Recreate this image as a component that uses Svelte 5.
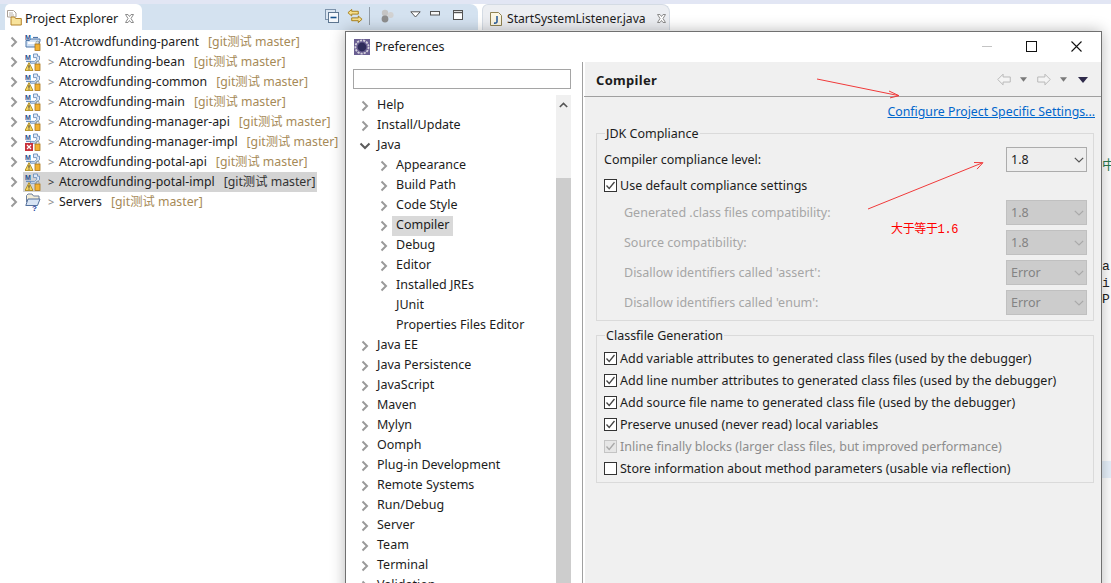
<script>
  const projects = [
    { name: '01-Atcrowdfunding-parent', kind: 'root' },
    { name: 'Atcrowdfunding-bean', kind: 'warn' },
    { name: 'Atcrowdfunding-common', kind: 'warn' },
    { name: 'Atcrowdfunding-main', kind: 'warn' },
    { name: 'Atcrowdfunding-manager-api', kind: 'warn' },
    { name: 'Atcrowdfunding-manager-impl', kind: 'err' },
    { name: 'Atcrowdfunding-potal-api', kind: 'warn' },
    { name: 'Atcrowdfunding-potal-impl', kind: 'warn', sel: true },
    { name: 'Servers', kind: 'srv' }
  ];
  const tree = [
    { t: 'Help', tw: 'r' }, { t: 'Install/Update', tw: 'r' }, { t: 'Java', tw: 'd' },
    { t: 'Appearance', tw: 'r', sub: 1 }, { t: 'Build Path', tw: 'r', sub: 1 }, { t: 'Code Style', tw: 'r', sub: 1 },
    { t: 'Compiler', tw: 'r', sub: 1, sel: true }, { t: 'Debug', tw: 'r', sub: 1 }, { t: 'Editor', tw: 'r', sub: 1 },
    { t: 'Installed JREs', tw: 'r', sub: 1 }, { t: 'JUnit', sub: 1 }, { t: 'Properties Files Editor', sub: 1 },
    { t: 'Java EE', tw: 'r' }, { t: 'Java Persistence', tw: 'r' }, { t: 'JavaScript', tw: 'r' }, { t: 'Maven', tw: 'r' },
    { t: 'Mylyn', tw: 'r' }, { t: 'Oomph', tw: 'r' }, { t: 'Plug-in Development', tw: 'r' }, { t: 'Remote Systems', tw: 'r' },
    { t: 'Run/Debug', tw: 'r' }, { t: 'Server', tw: 'r' }, { t: 'Team', tw: 'r' }, { t: 'Terminal', tw: 'r' }, { t: 'Validation', tw: 'r' }
  ];
  const disabledRows = [
    { l: 'Generated .class files compatibility:', v: '1.8' },
    { l: 'Source compatibility:', v: '1.8' },
    { l: "Disallow identifiers called 'assert':", v: 'Error' },
    { l: "Disallow identifiers called 'enum':", v: 'Error' }
  ];
  const classRows = [
    { l: 'Add variable attributes to generated class files (used by the debugger)', c: true },
    { l: 'Add line number attributes to generated class files (used by the debugger)', c: true },
    { l: 'Add source file name to generated class file (used by the debugger)', c: true },
    { l: 'Preserve unused (never read) local variables', c: true },
    { l: 'Inline finally blocks (larger class files, but improved performance)', c: true, dis: true },
    { l: 'Store information about method parameters (usable via reflection)', c: false }
  ];
</script>

{#snippet twistie(kind)}
  <svg class="tw" width="12" height="12" viewBox="0 0 12 12">
    {#if kind === 'r'}
      <path d="M3.5 1.5 8 6 3.5 10.5" fill="none" stroke="#9a9a9a" stroke-width="2"/>
    {:else if kind === 'd'}
      <path d="M1.5 3.5 6 8 10.5 3.5" fill="none" stroke="#5c5c5c" stroke-width="2"/>
    {/if}
  </svg>
{/snippet}

{#snippet check(on, dis)}
  <span class="cb" class:dis>
    {#if on}
      <svg width="13" height="13" viewBox="0 0 13 13"><path d="M2.5 6.5 5.2 9.5 10.5 3" fill="none" stroke={dis ? '#a8a8a8' : '#444'} stroke-width="1.3"/></svg>
    {/if}
  </span>
{/snippet}

{#snippet combo(v, dis)}
  <span class="combo" class:dis>
    <span>{v}</span>
    <svg width="10" height="6" viewBox="0 0 10 6"><path d="M.8.8 5 5 9.2.8" fill="none" stroke={dis ? '#a9a9a9' : '#555'} stroke-width="1.2"/></svg>
  </span>
{/snippet}

{#snippet projIcon(kind)}
  <svg class="pi" width="16" height="18" viewBox="0 0 16 18">
    {#if kind === 'srv'}
      <path d="M1.5 9V2.5L3 1h4l1.5 2H14v3" fill="#f2ecd8" stroke="#6c7f9c"/>
      <path d="M.8 12.5 3 6h12l-2.5 6.5z" fill="#d8e4f4" stroke="#54719c"/>
      <text x="7" y="18" class="q">?</text>
    {:else}
      <text x="0" y="6.5" class="m">M</text>
      {#if kind === 'root'}
        <path d="M1 14V7.5h3.5l1-1.5H15v2l-2 6z" fill="#cfe0f4" stroke="#4f76a8"/>
        <path d="M3 10h9" stroke="#fff" stroke-width="2"/>
        <path d="M8 4.5h5" stroke="#4f76a8" stroke-width="1.2"/>
      {:else}
        <path d="M8.5 1h4v2.2h2v3.6l-3.5 3.4H5.5V8.4h4.2l2-1.8V4.6H8.5z" fill="#dde8f6" stroke="#6a8fbd" stroke-width=".9"/>
        <path d="M1 8.4h5" stroke="#6a8fbd" stroke-width="1.3"/>
        {#if kind === 'err'}
          <rect x="0" y="10" width="8" height="8" fill="#c8323c"/>
          <path d="M2 12l4 4M6 12l-4 4" stroke="#fff" stroke-width="1.2"/>
        {:else}
          <path d="M4 9.6 8 17.5H0z" fill="#f4d35e" stroke="#a58214" stroke-width=".8"/>
          <path d="M4 12.2v2.6M4 15.6v1" stroke="#333" stroke-width="1"/>
        {/if}
      {/if}
      <rect x="10" y="11" width="5" height="6.5" fill="#f2b233" stroke="#a8741a" stroke-width=".8"/>
      <path d="M11 11V9.6a1.5 1.5 0 0 1 3 0V11" fill="none" stroke="#8a8a7a" stroke-width=".8"/>
    {/if}
  </svg>
{/snippet}

<div class="page">
  <div class="topstrip"></div>
  <div class="tabbar">
    <div class="viewfolder">
      <div class="viewtab">
        <svg width="16" height="16" viewBox="0 0 16 16">
          <path d="M1.5 .5h6l2.5 2.5v4H1.5z" fill="#fff" stroke="#a9a097"/>
          <path d="M3 3h4M3 5h5" stroke="#b7b0a6"/>
          <path d="M5 8.5V7h3.5l1 1.5h5.8V15H5z" fill="#f8e39c" stroke="#b4842c"/>
        </svg>
        <span class="vtext">Project Explorer</span>
        <svg class="x" width="11" height="11" viewBox="0 0 11 11"><path d="M1.5 1.5 4 1.5 5.5 3.5 7 1.5 9.5 1.5 7 5.5 9.5 9.5 7 9.5 5.5 7.5 4 9.5 1.5 9.5 4 5.5Z" fill="#fff" stroke="#8c8c8c"/></svg>
      </div>
      <div class="viewtools">
        <svg width="14" height="14" viewBox="0 0 14 14"><rect x=".5" y=".5" width="10" height="10" fill="#dbe6f2" stroke="#7d93ab"/><rect x="3.5" y="3.5" width="10" height="10" fill="#f4f7fb" stroke="#5c7590"/><path d="M5.5 8.5h6" stroke="#14508c" stroke-width="1.6"/></svg>
        <svg class="lnk" width="16" height="16" viewBox="0 0 17 16"><path d="M1 4.5 5 1v2h7v3H5v2z" fill="#f6df8c" stroke="#a57c14"/><path d="M16 11.5 12 15v-2H5v-3h7V8z" fill="#f6df8c" stroke="#a57c14"/></svg>
        <span class="sep"></span>
        <svg width="14" height="14" viewBox="0 0 14 14"><circle cx="5" cy="4" r="3.2" fill="#c4c4c4"/><circle cx="10.6" cy="6" r="3" fill="#d2d2d2"/><circle cx="5" cy="10" r="3.4" fill="#8e8e8e"/></svg>
        <svg class="dd" width="11" height="7" viewBox="0 0 11 7"><path d="M.8.8h9.4L5.5 6z" fill="#fff" stroke="#555"/></svg>
        <svg class="mi" width="10" height="5" viewBox="0 0 10 5"><rect x=".5" y=".5" width="9" height="3.5" fill="#f6f6f6" stroke="#555"/></svg>
        <svg class="ma" width="10" height="10" viewBox="0 0 10 10"><rect x=".5" y=".5" width="9" height="9" fill="#fff" stroke="#555"/><path d="M.5 2.5h9" stroke="#555" stroke-width="1.4"/></svg>
      </div>
    </div>
    <div class="edfolder">
      <div class="edtab">
        <svg width="12" height="14" viewBox="0 0 12 14"><path d="M.5.5h8l3 3v10H.5z" fill="#fbf6e4" stroke="#8f8252"/><path d="M7 4v5.5q0 2-3 1.6" fill="none" stroke="#2d5f9c" stroke-width="1.6"/></svg>
        <span class="vtext">StartSystemListener.java</span>
        <svg class="x" width="11" height="11" viewBox="0 0 11 11"><path d="M1.5 1.5 4 1.5 5.5 3.5 7 1.5 9.5 1.5 7 5.5 9.5 9.5 7 9.5 5.5 7.5 4 9.5 1.5 9.5 4 5.5Z" fill="#fff" stroke="#8c8c8c"/></svg>
      </div>
    </div>
  </div>

  <div class="explorer">
    {#each projects as p}
      <div class="prow">
        {@render twistie('r')}
        <div class="pcell" class:sel={p.sel} class:root={p.kind === 'root'}>
          {@render projIcon(p.kind)}
          {#if p.kind !== 'root'}<span class="gt">&gt;</span>{/if}
          <span class="pname">{p.name}</span>
          <span class="git">[git测试 master]</span>
        </div>
      </div>
    {/each}
  </div>

  <div class="peek">
    <span class="pk zh">中</span>
    <span class="pk a">a</span>
    <span class="pk i">i</span>
    <span class="pk p">P</span>
    <span class="band"></span>
  </div>

  <div class="dialog">
    <div class="title">
      <svg width="16" height="16" viewBox="0 0 16 16"><rect width="16" height="16" fill="#6a5f92"/><circle cx="8" cy="8" r="6.6" fill="none" stroke="#d5d2dc" stroke-width="1.8" stroke-dasharray="2.2 1"/><circle cx="8" cy="8" r="4.4" fill="#2f2c5a"/></svg>
      <span class="ttext">Preferences</span>
      <span class="spacer"></span>
      <span class="wb"><span class="wmin"></span></span>
      <span class="wb"><span class="wmax"></span></span>
      <span class="wb">
        <svg width="11" height="11" viewBox="0 0 11 11"><path d="M.5.5l10 10M10.5.5l-10 10" stroke="#111" stroke-width="1.1"/></svg>
      </span>
    </div>
    <div class="body">
      <div class="left">
        <div class="filter"></div>
        <div class="treewrap">
          <div class="tree">
            {#each tree as n}
              <div class="trow" class:sub={n.sub}>
                {@render twistie(n.tw)}
                <span class="tlabel" class:sel={n.sel}>{n.t}</span>
              </div>
            {/each}
          </div>
          <div class="sb">
            <div class="sbup"><svg width="9" height="6" viewBox="0 0 9 6"><path d="M.8 5 4.5 1.4 8.2 5" fill="none" stroke="#555" stroke-width="1.6"/></svg></div>
            <div class="sbthumb"></div>
          </div>
        </div>
      </div>
      <div class="right">
        <div class="rhead">
          <span class="rtitle">Compiler</span>
          <div class="nav">
            <svg width="14" height="13" viewBox="0 0 15 13"><path d="M.8 6.5 6.5.8v3h7.7v5.4H6.5v3z" fill="#f4f4f4" stroke="#b5b5b5"/></svg>
            <svg class="tri" width="7" height="5" viewBox="0 0 8 5"><path d="M0 0h8L4 5z" fill="#7a7a7a"/></svg>
            <svg class="fwd" width="14" height="13" viewBox="0 0 15 13"><path d="M14.2 6.5 8.5.8v3H.8v5.4h7.7v3z" fill="#f4f4f4" stroke="#b5b5b5"/></svg>
            <svg class="tri" width="7" height="5" viewBox="0 0 8 5"><path d="M0 0h8L4 5z" fill="#7a7a7a"/></svg>
            <svg class="menu" width="10" height="6" viewBox="0 0 10 6"><path d="M0 0h10L5 6z" fill="#2e2a4a"/></svg>
          </div>
        </div>
        <div class="linkrow"><span class="link">Configure Project Specific Settings...</span></div>

        <div class="group jdk">
          <span class="legend">JDK Compliance</span>
          <div class="frow first">
            <span>Compiler compliance level:</span>
            {@render combo('1.8', false)}
          </div>
          <div class="cbrow usedef">{@render check(true, false)}<span>Use default compliance settings</span></div>
          {#each disabledRows as r}
            <div class="frow drow">
              <span class="dlabel">{r.l}</span>
              {@render combo(r.v, true)}
            </div>
          {/each}
        </div>

        <div class="group cls">
          <span class="legend">Classfile Generation</span>
          {#each classRows as r}
            <div class="cbrow crow" class:distext={r.dis}>{@render check(r.c, r.dis)}<span>{r.l}</span></div>
          {/each}
        </div>
      </div>
    </div>
  </div>

  <svg class="marks" width="1111" height="583" viewBox="0 0 1111 583">
    <path d="M817 79 898 95.5M889 91l10 4.7-9 2.2" fill="none" stroke="#f03a3a" stroke-width="1"/>
    <path d="M868 209 982 163M974 162.5l9 .2-6 6.4" fill="none" stroke="#f03a3a" stroke-width="1"/>
  </svg>
  <span class="note">大于等于1.6</span>
</div>

<style>
  :global(body) { margin: 0; background: #fff; }
  .page {
    position: relative; width: 1111px; height: 583px; overflow: hidden; background: #fff;
    font-family: "Noto Sans", "Noto Sans CJK SC", sans-serif; font-size: 12.5px; color: #1c1c1c;
  }
  .topstrip { height: 4px; background: #e2e6f4; }
  .tabbar { display: flex; height: 26px; }
  .vtext { white-space: nowrap; }
  .viewfolder {
    width: 478px; flex: none; display: flex; justify-content: space-between; background: #d4e2f0;
    border-radius: 0 8px 0 0; padding-left: 5px; box-sizing: border-box; margin-right: 4px;
  }
  .viewtab {
    width: 137px; display: flex; align-items: center; background: #fff; padding: 2px 0 0 1px; box-sizing: border-box;
    border-radius: 5px 6px 0 0; height: 26px;
  }
  .viewtab .vtext { margin-left: 3px; }
  .viewtab .x { margin-left: 6px; }
  .viewtools { display: flex; align-items: center; padding-right: 15px; height: 24px; }
  .viewtools svg { flex: none; }
  .lnk { margin-left: 8px; }
  .sep { width: 1px; height: 18px; background: #8f9aa6; margin: 0 10px 0 6px; }
  .dd { margin: -4px 0 0 16px; }
  .mi { margin: -6px 0 0 9px; }
  .ma { margin: -2px 0 0 13px; }
  .edfolder { flex: 1; background: #fff; }
  .edtab {
    width: 188px; height: 26px; box-sizing: border-box; display: flex; align-items: center; padding: 2px 0 0 7px;
    background: #eceef2; border-radius: 6px 8px 0 0; border: 1px solid #d4dbe4; border-bottom: none;
  }
  .edtab .vtext { margin-left: 5px; font-size: 12.15px; }
  .edtab .x { margin-left: 10px; }

  .explorer { padding-top: 2px; width: 340px; font-size: 12.3px; }
  .prow { height: 20px; display: flex; align-items: center; white-space: nowrap; }
  .prow .tw { margin-left: 8px; margin-right: 5px; flex: none; }
  .pcell { display: flex; align-items: center; height: 20px; line-height: 22px; padding-right: 2px; margin-left: -2px; }
  .pcell .pi { margin-left: 2px; flex: none; }
  .pcell.sel { background: #d4d4d4; }
  .gt { color: #888; font-size: 11px; margin-left: 7px; width: 11px; }
  .pcell.sel .gt { color: #333; }
  .pname { margin-right: 9px; }
  .pcell.root .pname { margin-left: 5px; }
  .git { color: #a68a57; }
  .pcell.sel .git { color: #333; }
  .m { font: 700 7px "Liberation Sans", sans-serif; fill: #1f4f8f; }
  .q { font: 700 8px "Liberation Sans", sans-serif; fill: #1a3fa0; }

  .peek { position: absolute; inset: 0; pointer-events: none; font-family: "Liberation Mono", monospace; font-size: 13px; }
  .pk { position: absolute; left: 1102px; color: #222; }
  .zh { top: 154px; color: #2a7a50; font-family: "Noto Sans CJK SC", sans-serif; }
  .a { top: 259px; } .i { top: 276px; } .p { top: 292px; }
  .band { position: absolute; left: 1101px; top: 461px; width: 10px; height: 17px; background: #e8f2fc; }

  .dialog {
    position: absolute; left: 345px; top: 31px; width: 757px; height: 570px; box-sizing: border-box;
    background: #fff; border: 1px solid #707070; box-shadow: 0 0 14px rgba(0,0,0,.28);
  }
  .title { height: 30px; display: flex; align-items: center; padding: 0 2px 1px 8px; box-sizing: border-box; }
  .ttext { margin-left: 5px; }
  .spacer { flex: 1; }
  .wb { width: 45px; display: flex; align-items: center; justify-content: center; height: 30px; }
  .wmin { width: 10px; height: 1px; background: #c4c4c4; }
  .wmax { width: 9px; height: 9px; border: 1px solid #111; }
  .body { display: flex; height: 536px; }
  .left { width: 236px; flex: none; padding-left: 7px; box-sizing: border-box; }
  .filter { width: 218px; height: 20px; box-sizing: border-box; border: 1px solid #a5a5a5; margin-top: 7px; background: #fff; }
  .treewrap { display: flex; margin-top: 6px; width: 218px; position: relative; }
  .tree { flex: 1; padding-top: 1px; }
  .trow { height: 20px; display: flex; align-items: center; white-space: nowrap; }
  .trow .tw { margin-left: 6px; margin-right: 3px; flex: none; }
  .trow.sub .tw { margin-left: 25px; }
  .tlabel { padding: 0 3px; height: 20px; line-height: 18px; }
  .trow.sub .tlabel { margin-left: -1px; padding-left: 4px; }
  .tlabel.sel { background: #d9d9d9; }
  .sb { width: 15px; background: #f0f0f0; flex: none; display: flex; flex-direction: column; }
  .sbup { height: 83px; display: flex; justify-content: center; padding-top: 7px; box-sizing: border-box; }
  .sbthumb { flex: 1; background: #cdcdcd; }

  .right { flex: 1; background: #f0f0f0; border-left: 1px solid #a0a0a0; box-shadow: inset 2px 0 0 #fff; position: relative; }
  .rhead {
    display: flex; align-items: center; justify-content: space-between; margin-left: 1px;
    border-bottom: 1px solid #a0a0a0; padding: 1px 13px 0 12px; box-sizing: border-box; height: 35px;
  }
  .rtitle { font-weight: 700; font-size: 13px; letter-spacing: .3px; }
  .nav { display: flex; align-items: center; }
  .nav .tri { margin-left: 9px; }
  .nav .fwd { margin-left: 10px; }
  .nav .menu { margin-left: 11px; }
  .linkrow { text-align: right; padding-right: 6px; height: 29px; box-sizing: border-box; padding-top: 6px; font-size: 12.32px; }
  .link { color: #0066cc; text-decoration: underline; }
  .group {
    position: relative; border: 1px solid #dadada; margin-left: 13px; width: 498px; box-sizing: border-box; padding: 0 6px 0 7px;
  }
  .legend { position: absolute; left: 8px; top: -9px; background: #f0f0f0; padding: 0 1px; line-height: 18px; height: 18px; }
  .jdk { height: 188px; margin-top: 7px; padding-top: 13px; }
  .cls { height: 148px; margin-top: 14px; padding-top: 11px; }
  .frow { display: flex; justify-content: space-between; align-items: center; height: 25px; }
  .drow { margin-bottom: 5px; }
  .dlabel { color: #a6a6a6; padding-left: 20px; }
  .usedef { margin: 3px 0 5px; height: 20px; }
  .cbrow { display: flex; align-items: center; gap: 3px; }
  .crow { height: 22px; }
  .distext { color: #8d8d8d; }
  .cb { width: 13px; height: 13px; box-sizing: border-box; border: 1px solid #333; background: #fff; display: flex; align-items: center; justify-content: center; flex: none; }
  .cb svg { flex: none; margin: -1px; }
  .cb.dis { border-color: #c4c4c4; background: #e6e6e6; }
  .combo {
    width: 81px; height: 25px; box-sizing: border-box; display: flex; align-items: center; justify-content: space-between;
    padding: 0 2px 0 4px; background: #eeeeee; border: 1px solid #acacac;
  }
  .combo.dis { background: #cccccc; border-color: #c0c0c0; color: #838383; }

  .marks { position: absolute; left: 0; top: 0; pointer-events: none; }
  .note { position: absolute; left: 891px; top: 222px; font-size: 12px; letter-spacing: -.35px; line-height: 16px; color: #ff0000; font-family: "Liberation Mono", "Noto Sans CJK SC", monospace; }
</style>
